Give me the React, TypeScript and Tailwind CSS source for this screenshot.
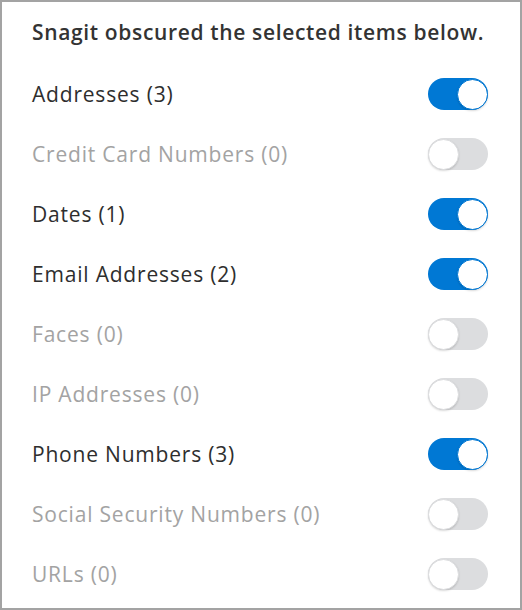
const items: { label: string; count: number }[] = [
  { label: "Addresses", count: 3 },
  { label: "Credit Card Numbers", count: 0 },
  { label: "Dates", count: 1 },
  { label: "Email Addresses", count: 2 },
  { label: "Faces", count: 0 },
  { label: "IP Addresses", count: 0 },
  { label: "Phone Numbers", count: 3 },
  { label: "Social Security Numbers", count: 0 },
  { label: "URLs", count: 0 },
];

function Toggle({ on }: { on: boolean }) {
  return (
    <div
      className={`flex items-center w-[60px] h-[32px] rounded-full shrink-0 ${
        on ? "bg-[#0078d4] justify-end" : "bg-[#dcdddf] justify-start"
      }`}
    >
      <div
        className={`w-[31px] h-[31px] rounded-full bg-white shadow-[0_1px_2px_rgba(0,0,0,0.15)] ${
          on ? "border-[1.5px] border-[#0078d4]" : "border-[1.5px] border-[#dcdddf]"
        }`}
      />
    </div>
  );
}

export default function App() {
  return (
    <div
      className="w-[522px] h-[610px] bg-white border-2 border-[#a3a3a3] pl-[30px] pr-[32px]"
      style={{ fontFamily: "'Open Sans', sans-serif" }}
    >
      <div className="h-[62px] flex items-center text-[21px] font-semibold tracking-[0.65px] text-[#333333]">
        Snagit obscured the selected items below.
      </div>
      {items.map(item => {
        const on = item.count > 0;
        return (
          <div key={item.label} className="h-[60px] flex items-center justify-between">
            <span
              className={`pt-[2px] text-[21px] tracking-[0.8px] ${on ? "text-[#2e2e2e]" : "text-[#a3a3a3]"}`}
            >
              {item.label} ({item.count})
            </span>
            <Toggle on={on} />
          </div>
        );
      })}
    </div>
  );
}
